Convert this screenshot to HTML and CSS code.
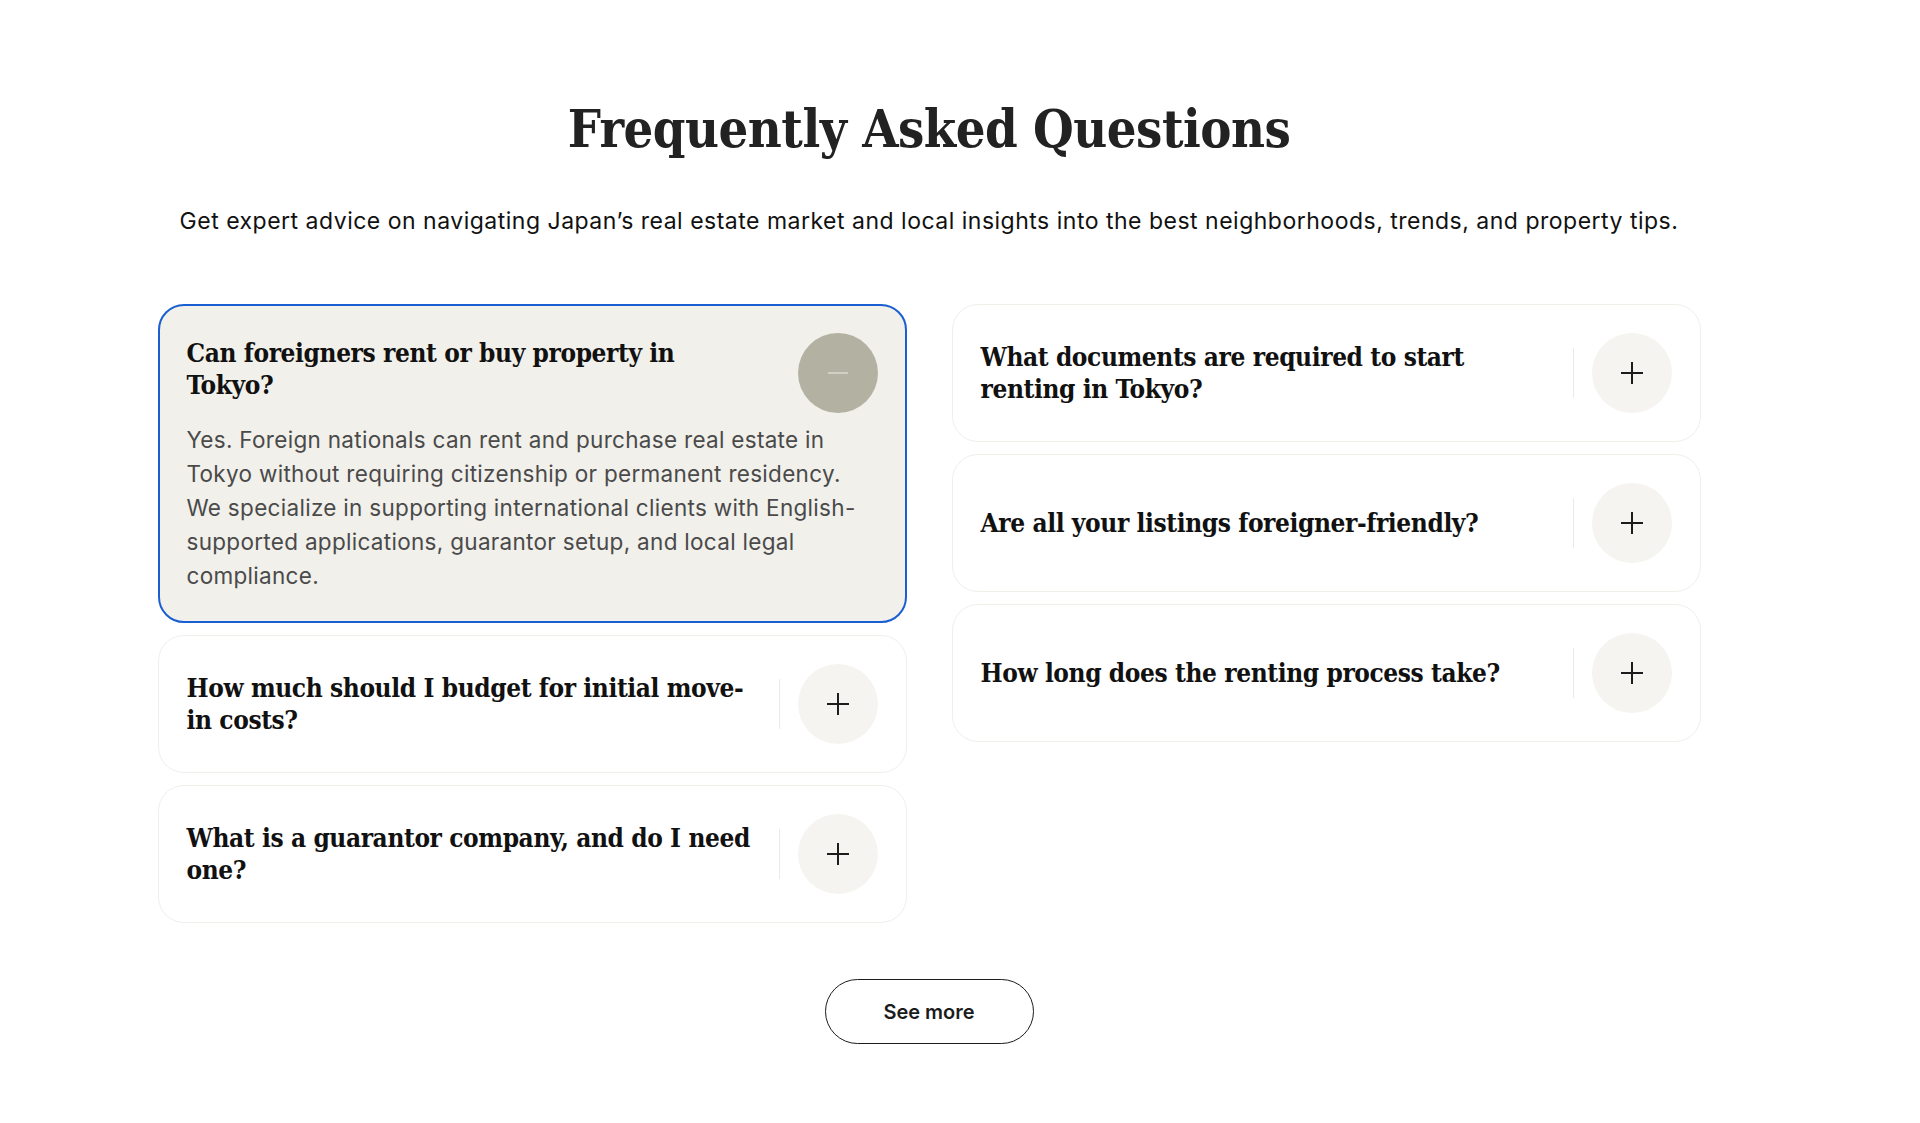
FILE: index.html
```html
<!DOCTYPE html>
<html lang="en">
<head>
    <meta charset="UTF-8">
    <meta name="viewport" content="width=device-width, initial-scale=1.0">
    <title>FAQ - Tokyo Real Estate</title>
    <link rel="stylesheet" href="styles.css">
</head>
<body>

    <section class="faq">
        <h1 class="faq-title">Frequently Asked Questions</h1>
        <p class="faq-lead">Get expert advice on navigating Japan’s real estate market and local insights into the best neighborhoods, trends, and property tips.</p>

        <div class="faq-grid">
            <!-- Left column -->
            <div class="faq-col">
                <div class="faq-item open">
                    <div class="faq-head">
                        <h3 class="faq-q">Can foreigners rent or buy property in Tokyo?</h3>
                        <button class="faq-toggle" aria-label="Collapse">
                            <svg width="22" height="22" viewBox="0 0 22 22"><path d="M1 11h20" stroke="currentColor" stroke-width="1.6"/></svg>
                        </button>
                    </div>
                    <p class="faq-a">Yes. Foreign nationals can rent and purchase real estate in Tokyo without requiring citizenship or permanent residency. We specialize in supporting international clients with English-supported applications, guarantor setup, and local legal compliance.</p>
                </div>

                <div class="faq-item">
                    <div class="faq-head">
                        <h3 class="faq-q">How much should I budget for initial move-in costs?</h3>
                        <span class="faq-sep"></span>
                        <button class="faq-toggle" aria-label="Expand">
                            <svg width="24" height="24" viewBox="0 0 24 24"><path d="M12 1v22M1 12h22" stroke="currentColor" stroke-width="2"/></svg>
                        </button>
                    </div>
                </div>

                <div class="faq-item">
                    <div class="faq-head">
                        <h3 class="faq-q">What is a guarantor company, and do I need one?</h3>
                        <span class="faq-sep"></span>
                        <button class="faq-toggle" aria-label="Expand">
                            <svg width="24" height="24" viewBox="0 0 24 24"><path d="M12 1v22M1 12h22" stroke="currentColor" stroke-width="2"/></svg>
                        </button>
                    </div>
                </div>
            </div>

            <!-- Right column -->
            <div class="faq-col">
                <div class="faq-item">
                    <div class="faq-head">
                        <h3 class="faq-q">What documents are required to start renting in Tokyo?</h3>
                        <span class="faq-sep"></span>
                        <button class="faq-toggle" aria-label="Expand">
                            <svg width="24" height="24" viewBox="0 0 24 24"><path d="M12 1v22M1 12h22" stroke="currentColor" stroke-width="2"/></svg>
                        </button>
                    </div>
                </div>

                <div class="faq-item">
                    <div class="faq-head">
                        <h3 class="faq-q">Are all your listings foreigner-friendly?</h3>
                        <span class="faq-sep"></span>
                        <button class="faq-toggle" aria-label="Expand">
                            <svg width="24" height="24" viewBox="0 0 24 24"><path d="M12 1v22M1 12h22" stroke="currentColor" stroke-width="2"/></svg>
                        </button>
                    </div>
                </div>

                <div class="faq-item">
                    <div class="faq-head">
                        <h3 class="faq-q">How long does the renting process take?</h3>
                        <span class="faq-sep"></span>
                        <button class="faq-toggle" aria-label="Expand">
                            <svg width="24" height="24" viewBox="0 0 24 24"><path d="M12 1v22M1 12h22" stroke="currentColor" stroke-width="2"/></svg>
                        </button>
                    </div>
                </div>
            </div>
        </div>

        <button class="see-more">See more</button>
    </section>

</body>
</html>
```

FILE: styles.css
```css
/* Page base */
body {
    margin: 0;
    padding: 0 62px 0 0;
    background-color: #fff;
    color: #1f1f1f;
    font-family: "Inter", "Noto Sans", sans-serif;
}

/* FAQ section wrapper */
.faq {
    width: 1543px;
    margin: 0 auto;
    padding: 95px 0 72px;
    display: flex;
    flex-direction: column;
    align-items: center;
}

.faq-title {
    margin: 0;
    font-family: "DejaVu Serif Condensed", "DejaVu Serif", serif;
    font-stretch: condensed;
    font-weight: bold;
    font-size: 52px;
    line-height: 68px;
    color: #222;
    letter-spacing: -0.5px;
}

.faq-lead {
    margin: 42px 0 0;
    font-size: 23px;
    line-height: 32px;
    color: #111;
    letter-spacing: 0.5px;
}

/* Two independent columns of cards */
.faq-grid {
    width: 100%;
    margin-top: 67px;
    display: grid;
    grid-template-columns: 1fr 1fr;
    gap: 45px;
    align-items: start;
}

.faq-col {
    display: flex;
    flex-direction: column;
    gap: 12px;
}

.faq-item {
    border: 1px solid #f0efea;
    border-radius: 26px;
    background-color: #fff;
    padding: 28px;
}

.faq-item.open {
    background-color: #f1f0eb;
    border: 2px solid #1a5fd1;
    padding: 27px 27px 28px;
}

.faq-head {
    display: flex;
    align-items: center;
}

.faq-q {
    flex: 1;
    margin: 0 18px 0 0;
    font-family: "DejaVu Serif Condensed", "DejaVu Serif", serif;
    font-stretch: condensed;
    font-weight: bold;
    font-size: 26px;
    line-height: 32px;
    color: #111;
    letter-spacing: -0.4px;
}

.open .faq-q {
    align-self: flex-start;
    margin-top: 4px;
    margin-right: 96px;
}

/* Thin rule between question and toggle */
.faq-sep {
    width: 1px;
    height: 50px;
    background-color: #ebeae4;
    margin-right: 18px;
}

.faq-toggle {
    flex: none;
    width: 80px;
    height: 80px;
    border: none;
    border-radius: 50%;
    background-color: #f5f4f1;
    color: #1c1c1c;
    display: flex;
    justify-content: center;
    align-items: center;
    padding: 0;
    cursor: pointer;
}

.open .faq-toggle {
    background-color: #b3b2a2;
    color: #d9d8cd;
}

.faq-a {
    margin: 10px 0 0;
    font-size: 22.5px;
    line-height: 34px;
    color: #4a4a4a;
    letter-spacing: 0.3px;
}

/* Outline pill button */
.see-more {
    margin-top: 56px;
    width: 209px;
    height: 65px;
    border: 1.5px solid #1c1c1c;
    border-radius: 33px;
    background-color: #fff;
    font-family: "Inter", "Noto Sans", sans-serif;
    font-size: 20px;
    font-weight: 600;
    color: #1c1c1c;
    cursor: pointer;
}
```
